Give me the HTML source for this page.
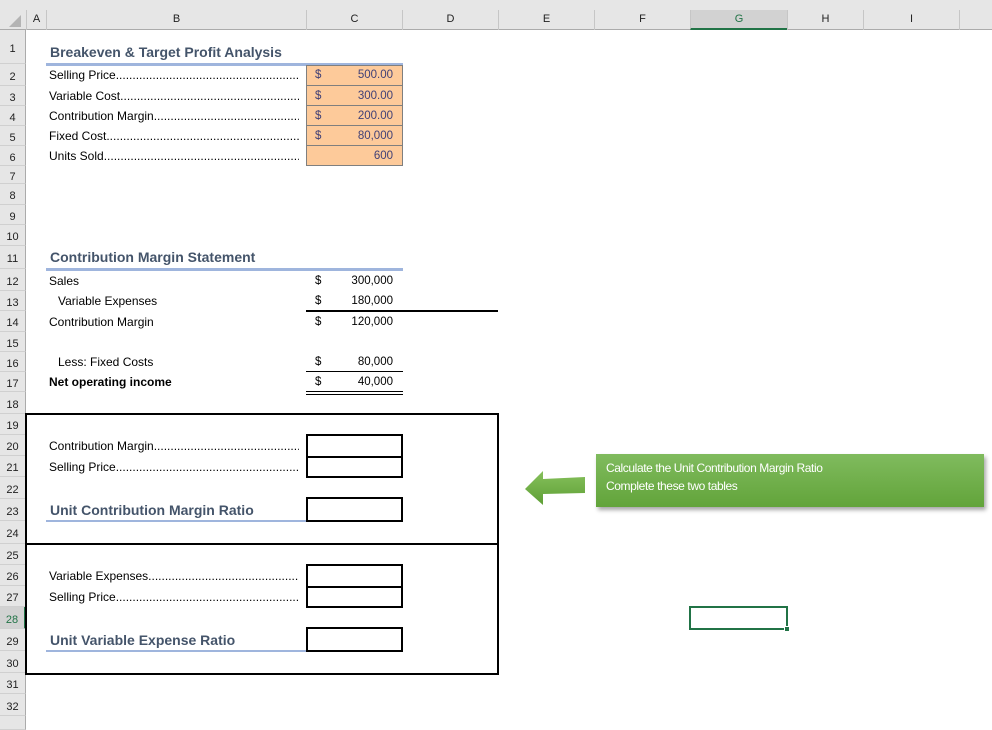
<!DOCTYPE html>
<html><head><meta charset="utf-8"><style>
*{margin:0;padding:0;box-sizing:border-box}
body{width:992px;height:719px;background:#fff;position:relative;overflow:hidden;font-family:"Liberation Sans",sans-serif;font-size:12px;color:#000}
.a{position:absolute}
.hdr{position:absolute;top:0;left:0;width:992px;height:30px;background:#e6e6e6;border-bottom:1px solid #ababab}
.ch{position:absolute;top:10px;height:20px;border-left:1px solid #c6c6c6;text-align:center;font-size:11px;line-height:19px;color:#222}
.rh{position:absolute;left:0;width:26px;background:#e6e6e6;border-right:1px solid #ababab;border-bottom:1px solid #d0d0d0;font-size:11px;text-align:center;color:#222}
.t{position:absolute;white-space:nowrap;line-height:20px}
.lead{position:absolute;left:49px;width:250px;overflow:hidden;white-space:nowrap;line-height:20px;font-size:12px}
.ttl{font-weight:bold;font-size:14px;color:#44546a}
.or{position:absolute;left:306px;width:97px;background:#fdca9a;border:1px solid #7f7f7f;color:#3f3f76;font-size:11.5px}
.box{position:absolute;left:306px;width:97px;border:2px solid #000}
.v{position:absolute;width:95px;left:306px;font-size:11.5px;line-height:20px}
.v .d{position:absolute;left:9px}.v .n{position:absolute;right:8px}
</style></head><body>
<div class="hdr"></div>
<div class="a" style="left:0;top:10px;width:26px;height:20px;"><div class="a" style="left:9px;top:5px;width:0;height:0;border-left:12px solid transparent;border-bottom:12px solid #b4b4b4"></div></div>
<div class="ch" style="left:26px;width:20px">A</div>
<div class="ch" style="left:46px;width:260px">B</div>
<div class="ch" style="left:306px;width:96px">C</div>
<div class="ch" style="left:402px;width:96px">D</div>
<div class="ch" style="left:498px;width:96px">E</div>
<div class="ch" style="left:594px;width:96px">F</div>
<div class="ch" style="left:690px;width:97px;background:#d2d2d2;color:#217346;border-bottom:2px solid #217346;height:20px">G</div>
<div class="ch" style="left:787px;width:76px">H</div>
<div class="ch" style="left:863px;width:96px">I</div>
<div class="ch" style="left:959px;width:33px"></div>

<div id="rows"></div>
<script>
var b=[30,64,86,106,126,146,166,184,205,225,246,269,291,311,332,352,372,392,414,435,456,477,499,521,544,565,586,607,629,651,673,694,716,730];
var h='';
for(var i=0;i<33;i++){var t=b[i],hh=b[i+1]-b[i];var sel=(i==27);
h+='<div class="rh" style="top:'+t+'px;height:'+hh+'px;line-height:'+(hh+4)+'px;'+(sel?'background:#d2d2d2;color:#217346;border-right:2px solid #217346;':'')+'">'+(i<32?(i+1):'')+'</div>';}
document.getElementById('rows').innerHTML=h;
</script>

<div class="t ttl" style="left:50px;top:42px">Breakeven &amp; Target Profit Analysis</div>
<div class="a" style="left:46px;top:63px;width:357px;height:3px;background:#9fb5dd"></div>
<div class="or" style="top:65px;height:101px"></div>
<div class="a" style="left:306px;top:85px;width:97px;height:1px;background:#7f7f7f"></div>
<div class="a" style="left:306px;top:105px;width:97px;height:1px;background:#7f7f7f"></div>
<div class="a" style="left:306px;top:125px;width:97px;height:1px;background:#7f7f7f"></div>
<div class="a" style="left:306px;top:145px;width:97px;height:1px;background:#7f7f7f"></div>
<div class="lead" style="top:65px">Selling Price..............................................................................</div>
<div class="lead" style="top:86px">Variable Cost..............................................................................</div>
<div class="lead" style="top:106px">Contribution Margin..............................................................................</div>
<div class="lead" style="top:126px">Fixed Cost..............................................................................</div>
<div class="lead" style="top:146px">Units Sold..............................................................................</div>
<div class="v" style="top:65px;color:#3f3f76"><span class="d">$</span><span class="n">500.00</span></div>
<div class="v" style="top:86px;color:#3f3f76"><span class="d">$</span><span class="n">300.00</span></div>
<div class="v" style="top:106px;color:#3f3f76"><span class="d">$</span><span class="n">200.00</span></div>
<div class="v" style="top:126px;color:#3f3f76"><span class="d">$</span><span class="n">80,000</span></div>
<div class="v" style="top:146px;color:#3f3f76"><span class="n">600</span></div>

<div class="t ttl" style="left:50px;top:247px">Contribution Margin Statement</div>
<div class="a" style="left:46px;top:268px;width:357px;height:3px;background:#9fb5dd"></div>
<div class="t" style="left:49px;top:271px">Sales</div>
<div class="t" style="left:58px;top:291px">Variable Expenses</div>
<div class="t" style="left:49px;top:312px">Contribution Margin</div>
<div class="t" style="left:58px;top:352px">Less: Fixed Costs</div>
<div class="t" style="left:49px;top:372px;font-weight:bold">Net operating income</div>
<div class="v" style="top:271px"><span class="d">$</span><span class="n">300,000</span></div>
<div class="v" style="top:291px"><span class="d">$</span><span class="n">180,000</span></div>
<div class="v" style="top:312px"><span class="d">$</span><span class="n">120,000</span></div>
<div class="v" style="top:352px"><span class="d">$</span><span class="n">80,000</span></div>
<div class="v" style="top:372px"><span class="d">$</span><span class="n">40,000</span></div>
<div class="a" style="left:306px;top:310px;width:192px;height:2px;background:#000"></div>
<div class="a" style="left:306px;top:371px;width:97px;height:1px;background:#000"></div>
<div class="a" style="left:306px;top:391px;width:97px;height:4px;border-top:1px solid #000;border-bottom:1px solid #000"></div>

<div class="a" style="left:25px;top:413px;width:474px;height:132px;border:2px solid #000"></div>
<div class="a" style="left:25px;top:543px;width:474px;height:132px;border:2px solid #000"></div>
<div class="lead" style="top:436px">Contribution Margin..............................................................................</div>
<div class="lead" style="top:457px">Selling Price..............................................................................</div>
<div class="box" style="top:434px;height:24px"></div>
<div class="box" style="top:456px;height:22px"></div>
<div class="t ttl" style="left:50px;top:500px">Unit Contribution Margin Ratio</div>
<div class="a" style="left:46px;top:520px;width:261px;height:2px;background:#9fb5dd"></div>
<div class="box" style="top:497px;height:25px"></div>

<div class="lead" style="top:566px">Variable Expenses..............................................................................</div>
<div class="lead" style="top:587px">Selling Price..............................................................................</div>
<div class="box" style="top:564px;height:24px"></div>
<div class="box" style="top:586px;height:22px"></div>
<div class="t ttl" style="left:50px;top:630px">Unit Variable Expense Ratio</div>
<div class="a" style="left:46px;top:650px;width:261px;height:2px;background:#9fb5dd"></div>
<div class="box" style="top:627px;height:25px"></div>

<div class="a" style="left:596px;top:454px;width:388px;height:53px;background:linear-gradient(#80bb5e,#62a43a);box-shadow:2px 3px 4px rgba(0,0,0,0.35);color:#fff;font-size:12px;line-height:18px;padding:5px 0 0 10px;letter-spacing:-0.4px;white-space:nowrap;overflow:hidden">Calculate the Unit Contribution Margin Ratio<br>Complete these two tables</div>
<svg class="a" style="left:520px;top:468px" width="70" height="42"><defs><linearGradient id="g" x1="0" y1="0" x2="0" y2="1"><stop offset="0" stop-color="#86c05c"/><stop offset="1" stop-color="#5e9f35"/></linearGradient></defs><polygon points="5,21 23,3 23,11 65,9 65,25 23,26 23,37" fill="url(#g)"/></svg>

<div class="a" style="left:689px;top:606px;width:99px;height:24px;border:2px solid #217346"></div>
<div class="a" style="left:784px;top:626px;width:6px;height:6px;background:#217346;border:1px solid #fff"></div>
</body></html>
